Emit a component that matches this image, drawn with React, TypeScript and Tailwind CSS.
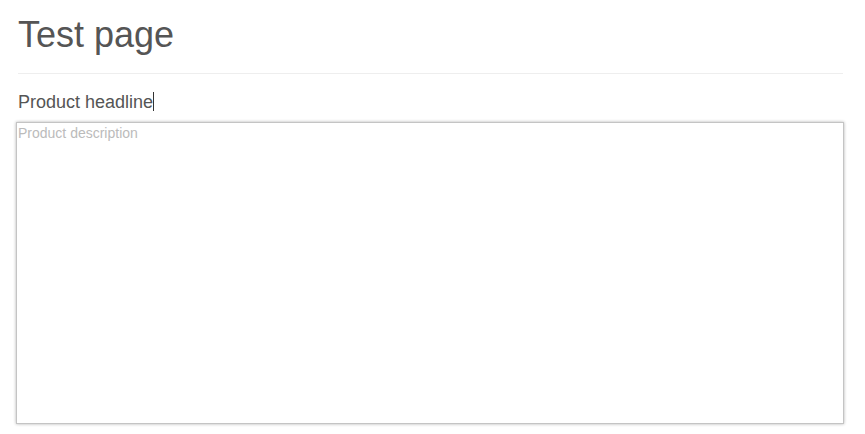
export default function App() {
  return (
    <div className="w-[865px] h-[434px] bg-white overflow-hidden" style={{ fontFamily: '"Liberation Sans", Arial, sans-serif' }}>
      <div className="px-[18px] pt-[15px]">
        <h1 className="text-[36px] leading-[1.1] text-[#555] m-0 pb-[18px] border-b border-[#eee] w-[825px]">Test page</h1>
        <div className="mt-[18px] text-[18px] leading-[20px] text-[#555] flex items-center">
          <span>Product headline</span>
          <span className="inline-block w-px h-[19px] bg-[#333]"></span>
        </div>
        <div className="mt-[10px] -ml-[2px] w-[828px] h-[302px] border border-[#c4c4c4] shadow-[0_0_3px_rgba(0,0,0,0.3)] pl-[1px] pt-[2px] text-[14px] leading-[16px] text-[#bbb]">
          Product description
        </div>
      </div>
    </div>
  );
}
